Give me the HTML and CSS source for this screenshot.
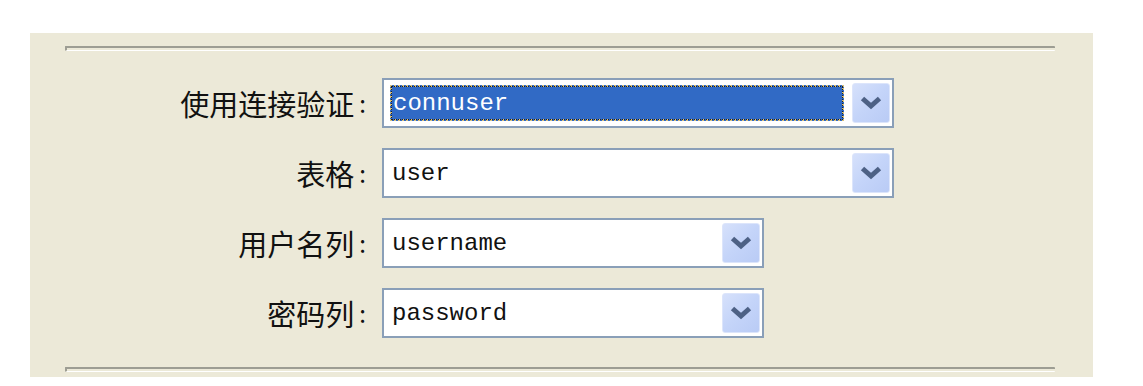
FILE: index.html
```html
<!DOCTYPE html>
<html lang="zh-CN">
<head>
    <meta charset="UTF-8">
    <title>连接验证设置</title>
    <link rel="stylesheet" href="styles.css">
</head>
<body>

<div class="panel">
    <div class="separator"></div>

    <div class="form">
        <label class="form-label">使用连接验证<span class="colon">:</span></label>
        <div class="combo wide focused">
            <div class="combo-value"><span class="selected">connuser</span></div>
            <div class="combo-btn">
                <svg viewBox="0 0 22 14" width="22" height="14"><path d="M2.5 2.5 L11 10 L19.5 2.5" fill="none" stroke="#4d6185" stroke-width="5"/></svg>
            </div>
        </div>

        <label class="form-label">表格<span class="colon">:</span></label>
        <div class="combo wide">
            <div class="combo-value">user</div>
            <div class="combo-btn">
                <svg viewBox="0 0 22 14" width="22" height="14"><path d="M2.5 2.5 L11 10 L19.5 2.5" fill="none" stroke="#4d6185" stroke-width="5"/></svg>
            </div>
        </div>

        <label class="form-label">用户名列<span class="colon">:</span></label>
        <div class="combo narrow">
            <div class="combo-value">username</div>
            <div class="combo-btn">
                <svg viewBox="0 0 22 14" width="22" height="14"><path d="M2.5 2.5 L11 10 L19.5 2.5" fill="none" stroke="#4d6185" stroke-width="5"/></svg>
            </div>
        </div>

        <label class="form-label">密码列<span class="colon">:</span></label>
        <div class="combo narrow">
            <div class="combo-value">password</div>
            <div class="combo-btn">
                <svg viewBox="0 0 22 14" width="22" height="14"><path d="M2.5 2.5 L11 10 L19.5 2.5" fill="none" stroke="#4d6185" stroke-width="5"/></svg>
            </div>
        </div>
    </div>

    <div class="separator"></div>
</div>

</body>
</html>
```

FILE: styles.css
```css
body {
    margin: 0;
    background: #ffffff;
    font-family: "Noto Sans CJK SC", sans-serif;
}
.panel {
    margin: 33px 0 0 30px;
    width: 1063px;
    height: 344px;
    box-sizing: border-box;
    padding: 13px 38px 0 35px;
    background: #ece9d8;
}
.separator {
    height: 2px;
    border-top: 2px solid #9d9d93;
    border-bottom: 1px solid #ffffff;
    border-left: 2px solid #9d9d93;
    border-radius: 1px;
}
.form {
    display: grid;
    grid-template-columns: 301px auto;
    grid-auto-rows: 50px;
    column-gap: 16px;
    row-gap: 20px;
    align-items: center;
    margin: 27px 0 29px 0;
}
.form-label {
    display: flex;
    justify-content: flex-end;
    align-items: center;
    height: 50px;
    font-size: 29px;
    line-height: 1;
    color: #111111;
}
.colon {
    padding-left: 5px;
    font-size: 24px;
}
.combo {
    display: flex;
    align-items: center;
    height: 50px;
    box-sizing: border-box;
    border: 2px solid #8a9fb8;
    background: #ffffff;
    padding: 0 2px 0 6px;
}
.combo.wide {
    width: 512px;
}
.combo.narrow {
    width: 382px;
}
.combo-value {
    flex: 1;
    font-family: "Liberation Mono", monospace;
    font-size: 24px;
    color: #111111;
    padding-left: 2px;
}
.focused .combo-value {
    padding-left: 0;
    margin-right: 8px;
}
.selected {
    display: block;
    height: 36px;
    line-height: 34px;
    box-sizing: border-box;
    padding-left: 1px;
    background: #316ac5;
    color: #ffffff;
    border: 2px dotted #d8c07a;
    outline: 1px dotted #222222;
    outline-offset: -2px;
}
.combo-btn {
    width: 38px;
    height: 40px;
    display: flex;
    align-items: center;
    justify-content: center;
    border-radius: 3px;
    background: linear-gradient(135deg, #d6e1fb 0%, #c4d4f9 50%, #b9cbf5 100%);
    border: 1px solid #dce5fb;
    box-sizing: border-box;
}
```
